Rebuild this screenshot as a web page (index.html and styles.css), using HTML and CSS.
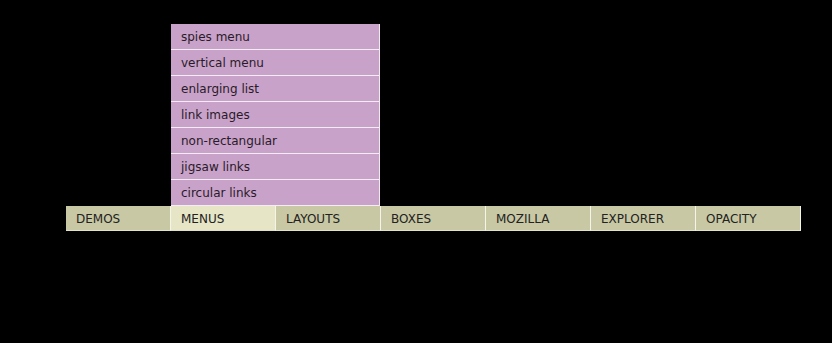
FILE: index.html
```html
<!DOCTYPE html>
<html lang="en">

<head>
    <meta charset="UTF-8">
    <title>Menus</title>
    <link rel="stylesheet" href="styles.css">
</head>

<body>
    <div class="menu-wrap">
        <ul class="menu">
            <li><a href="#">DEMOS</a></li>
            <li class="current">
                <a href="#">MENUS</a>
                <!-- sub menu opens upwards -->
                <ul class="sub">
                    <li><a href="#">spies menu</a></li>
                    <li><a href="#">vertical menu</a></li>
                    <li><a href="#">enlarging list</a></li>
                    <li><a href="#">link images</a></li>
                    <li><a href="#">non-rectangular</a></li>
                    <li><a href="#">jigsaw links</a></li>
                    <li><a href="#">circular links</a></li>
                </ul>
            </li>
            <li><a href="#">LAYOUTS</a></li>
            <li><a href="#">BOXES</a></li>
            <li><a href="#">MOZILLA</a></li>
            <li><a href="#">EXPLORER</a></li>
            <li><a href="#">OPACITY</a></li>
        </ul>
    </div>
</body>

</html>
```

FILE: styles.css
```css
body {
  margin: 0;
  background: #000000;
  font-family: "DejaVu Sans", Verdana, sans-serif;
  font-size: 12px;
}
.menu-wrap {
  padding: 206px 0 0 66px;
}
.menu {
  display: flex;
  margin: 0;
  padding: 0;
  list-style: none;
}
.menu > li {
  position: relative;
  width: 104px;
  height: 24px;
  background: #c8c8a4;
  border-right: 1px solid #f4f4e8;
  border-bottom: 1px solid #e2e2cc;
}
.menu > li.current {
  background: #e6e6c6;
}
.menu a {
  display: block;
  padding: 1px 0 0 10px;
  line-height: 24px;
  color: #222222;
  text-decoration: none;
}
.sub {
  position: absolute;
  left: 0;
  bottom: 100%;
  width: 208px;
  margin: 0;
  padding: 0;
  list-style: none;
  border-right: 1px solid #f2e8f2;
}
.sub li {
  height: 25px;
  background: #c8a2c8;
  border-bottom: 1px solid #f4ecf4;
}
.sub a {
  padding-top: 2px;
  line-height: 23px;
  color: #2a1a2a;
}
```
